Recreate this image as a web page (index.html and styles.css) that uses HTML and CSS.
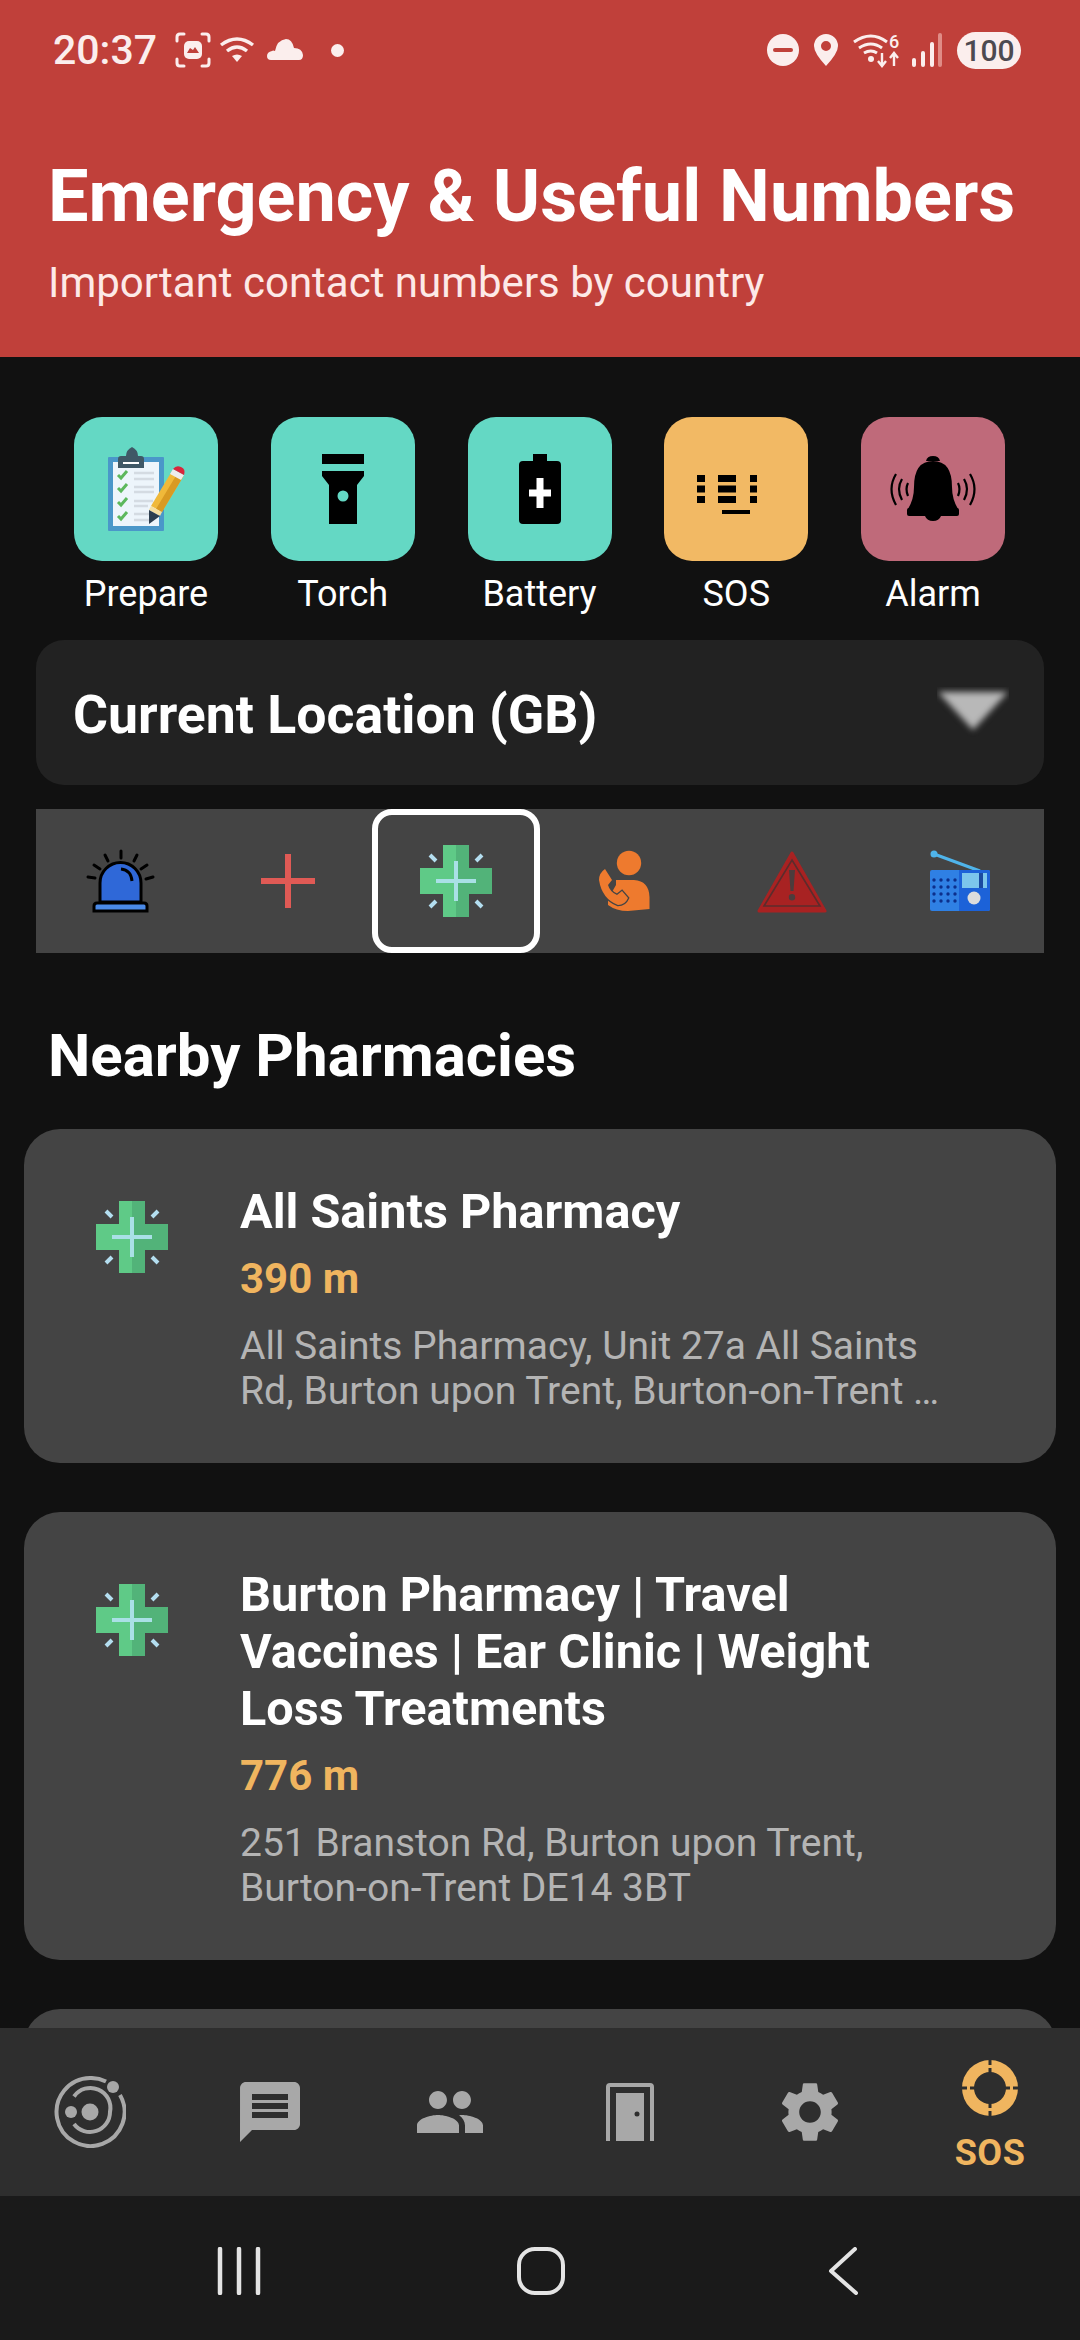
FILE: index.html
```html
<!DOCTYPE html>
<html lang="en">
<head>
    <meta charset="UTF-8">
    <meta name="viewport" content="width=device-width, initial-scale=1.0">
    <title>Emergency &amp; Useful Numbers</title>
    <link rel="stylesheet" href="styles.css">
</head>
<body>
    <svg class="defs" width="0" height="0">
        <symbol id="pharmacy" viewBox="0 0 72 72">
            <path fill="#5fca87" d="M23 0h26v23h23v26H49v23H23V49H0V23h23z"/>
            <path fill="#52b379" d="M36 0h13v23h23v26H49v23H36z"/>
            <path fill="#a9e0e6" d="M34 16h4v18h18v4H38v18h-4V38H16v-4h18z"/>
            <g stroke="#b4def0" stroke-width="4">
                <path d="M10 10l6 6M62 10l-6 6M10 62l6-6M62 62l-6-6"/>
            </g>
        </symbol>
    </svg>

    <div class="screen">
        <div class="content">
            <header class="header">
                <div class="statusbar">
                    <span class="clock">20:37</span>
                    <svg class="st-face" width="36" height="36" viewBox="0 0 36 36" fill="none" stroke="#fbeeed" stroke-width="3" stroke-linecap="round">
                        <path d="M2 9V5q0-3 3-3h4M27 2h4q3 0 3 3v4M34 27v4q0 3-3 3h-4M9 34H5q-3 0-3-3v-4"/>
                        <rect x="9" y="9" width="18" height="18" rx="5" fill="#fbeeed" stroke="none"/>
                        <path d="M12 21l3-5 3 2 2-3 4 6z" fill="#c0403a" stroke="none"/>
                    </svg>
                    <svg class="st-wifi" width="36" height="26" viewBox="0 0 36 26" fill="none" stroke="#fbeeed" stroke-width="3.4">
                        <path d="M2 8q16-12 32 0M8 14q10-8 20 0"/>
                        <path d="M13 19q5-3 10 0l-5 6z" fill="#fbeeed" stroke="none"/>
                    </svg>
                    <svg class="st-cloud" width="36" height="22" viewBox="0 0 36 22" fill="#fbeeed">
                        <path d="M4 21q-4 0-4-4t5-5q1-1 3 0 2-11 11-12 6 0 8 9 8 0 9 7 0 5-4 5z"/>
                    </svg>
                    <span class="st-dot"></span>
                    <span class="st-spacer"></span>
                    <svg class="st-dnd" width="32" height="32" viewBox="0 0 32 32">
                        <circle cx="16" cy="16" r="16" fill="#fbeeed"/>
                        <rect x="6" y="14" width="20" height="4" rx="2" fill="#c0403a"/>
                    </svg>
                    <svg class="st-pin" width="24" height="32" viewBox="0 0 24 32">
                        <path fill="#fbeeed" fill-rule="evenodd" d="M12 0a12 12 0 0 1 12 12q0 7-12 20Q0 19 0 12A12 12 0 0 1 12 0zm0 7a5 5 0 1 0 0 10 5 5 0 0 0 0-10z"/>
                    </svg>
                    <svg class="st-wifi6" width="48" height="36" viewBox="0 0 48 36" fill="none" stroke="#fbeeed" stroke-width="3">
                        <path d="M1 10q17-12 33 0M6 16q12-8 23 0M11 21q7-4 13 0"/>
                        <circle cx="18" cy="27" r="3" fill="#fbeeed" stroke="none"/>
                        <path d="M29 21v13M25 29l4 5 4-5M41 34V21M37 26l4-5 4 5" stroke-width="2.4"/>
                        <text x="36" y="16" class="st-six">6</text>
                    </svg>
                    <svg class="st-signal" width="30" height="34" viewBox="0 0 30 34">
                        <rect x="0" y="25" width="4" height="9" rx="2" fill="#fbeeed"/>
                        <rect x="9" y="18" width="4" height="16" rx="2" fill="#fbeeed"/>
                        <rect x="18" y="9" width="4" height="25" rx="2" fill="#fbeeed"/>
                        <rect x="26" y="0" width="4" height="34" rx="2" fill="#e08c86"/>
                    </svg>
                    <span class="st-battery">100</span>
                </div>
                <h1 class="title">Emergency &amp; Useful Numbers</h1>
                <p class="subtitle">Important contact numbers by country</p>
            </header>

            <section class="tools">
                <div class="tool">
                    <div class="tile teal">
                        <svg width="144" height="144" viewBox="0 0 144 144">
                            <rect x="34" y="40" width="56" height="74" rx="1" fill="#4a97c9"/>
                            <rect x="39" y="45" width="46" height="64" fill="#edf5fb"/>
                            <path fill="#3f5866" d="M44 51v-9q0-3 3-3h5q0-6 6-9 6 3 6 9h3q3 0 3 3v9z"/>
                            <rect x="49" y="45" width="16" height="2" fill="#fff"/>
                            <g fill="none" stroke="#5cb85c" stroke-width="3">
                                <path d="M44 58l3 3 6-7M44 71l3 3 6-7M44 85l3 3 6-7M44 99l3 3 6-7"/>
                            </g>
                            <g fill="none" stroke="#d4dbe2" stroke-width="2.6">
                                <path d="M60 56h20M60 62h20M60 70h20M60 75h20M60 84h19M60 89h14M60 97h15M60 103h15"/>
                            </g>
                            <path fill="#f0b93a" d="M98 54l11 6-21 35-11-6z"/>
                            <path fill="#d99a22" d="M103 57l6 3-21 35-6-3z"/>
                            <path fill="#f6dfa0" d="M77 89l11 6-2 4-11-6z"/>
                            <path fill="#2c3e50" d="M75 93l11 6-11 8z"/>
                            <path fill="#ededed" d="M96 57l3-5 11 6-3 5z"/>
                            <path fill="#d9263c" d="M99 52q3-4 8-2t3 8z"/>
                        </svg>
                    </div>
                    <span class="tool-label">Prepare</span>
                </div>
                <div class="tool">
                    <div class="tile teal">
                        <svg width="144" height="144" viewBox="0 0 144 144">
                            <rect x="51" y="37" width="42" height="10"/>
                            <path fill-rule="evenodd" d="M51 54h42v5l-7 9v39H58V68l-7-9zM72 73.500a5.500 5.500 0 1 0 0 11 5.500 5.500 0 0 0 0-11z"/>
                        </svg>
                    </div>
                    <span class="tool-label">Torch</span>
                </div>
                <div class="tool">
                    <div class="tile teal">
                        <svg width="144" height="144" viewBox="0 0 144 144">
                            <path d="M65 37h14v7h10q4 0 4 4v55q0 4-4 4H55q-4 0-4-4V48q0-4 4-4h10z"/>
                            <path fill="#fff" d="M68.500 61h7v11.500H83v7h-7.500V91h-7V79.500H61v-7h7.500z"/>
                        </svg>
                    </div>
                    <span class="tool-label">Battery</span>
                </div>
                <div class="tool">
                    <div class="tile amber">
                        <svg width="144" height="144" viewBox="0 0 144 144">
                            <path d="M33 58h8v7h-8zM33 68.500h8v7h-8zM33 79h8v7h-8zM54 58h18v7H54zM54 68.500h18v7H54zM54 79h18v7H54zM86 58h7v7h-7zM86 68.500h7v7h-7zM86 79h7v7h-7zM58 93h28v4H58z"/>
                        </svg>
                    </div>
                    <span class="tool-label">SOS</span>
                </div>
                <div class="tool">
                    <div class="tile rose">
                        <svg width="144" height="144" viewBox="0 0 144 144">
                            <path d="M65 44q1-5 7-5t7 5z"/>
                            <path d="M72 44q19 0 19 26 0 12 6 22H47q6-10 6-22 0-26 19-26z"/>
                            <rect x="46" y="91" width="52" height="8" rx="2"/>
                            <path d="M64 99h16q-2 5-8 5t-8-5z"/>
                            <g fill="none" stroke="#000" stroke-width="2.2">
                                <path d="M35 57q-9 15 0 31M41 62q-6 10 0 21M47 66q-3 6 0 13"/>
                                <path d="M109 57q9 15 0 31M103 62q6 10 0 21M97 66q3 6 0 13"/>
                            </g>
                        </svg>
                    </div>
                    <span class="tool-label">Alarm</span>
                </div>
            </section>

            <div class="location">
                <span class="location-name">Current Location (GB)</span>
                <div class="chevron"><div class="chevron-shape"></div></div>
            </div>

            <nav class="tabs">
                <div class="tab">
                    <svg width="72" height="72" viewBox="0 0 72 72">
                        <path fill="#2f68d8" stroke="#000" stroke-width="3" d="M16 57V38a20.500 20.500 0 0 1 41 0v19z"/>
                        <path fill="#4a8ae8" stroke="#000" stroke-width="3" d="M10 66v-5q0-3 3-3h47q3 0 3 3v5z"/>
                        <path fill="none" stroke="#000" stroke-width="3" d="M37 24q10 1 11 12"/>
                        <g stroke="#000" stroke-width="3" stroke-linecap="round">
                            <path d="M37 6v7M21 10l3 6M53 10l-3 6M10 20l6 4M63 20l-6 4M4 32l7 1M69 32l-7 2"/>
                        </g>
                    </svg>
                </div>
                <div class="tab">
                    <svg width="72" height="72" viewBox="0 0 72 72">
                        <path fill="#e05a55" d="M33 9h6v24h24v6H39v24h-6V39H9v-6h24z"/>
                    </svg>
                </div>
                <div class="tab active">
                    <svg width="72" height="72"><use href="#pharmacy"/></svg>
                </div>
                <div class="tab">
                    <svg width="72" height="72" viewBox="0 0 72 72">
                        <circle cx="41" cy="18" r="12.200" fill="#ee7a2e"/>
                        <path fill="#ee7a2e" d="M28 35H46Q61 36 61.500 52V64L40 66Q28 66 20 60V54L28 40Z"/>
                        <path fill="#ee7a2e" stroke="#444" stroke-width="2.600" paint-order="stroke" d="M17 24L24 35 20 40Q22 47 29 50L34 46 40 53Q37 60 30 60 14 54 11 35 11 28 17 24Z"/>
                    </svg>
                </div>
                <div class="tab">
                    <svg width="72" height="72" viewBox="0 0 72 72">
                        <path fill="#a82222" stroke="#a82222" stroke-width="3" stroke-linejoin="round" d="M36 8l33 58H3z"/>
                        <path fill="none" stroke="#5c2c2c" stroke-width="1.600" d="M36 15l28 46H8z"/>
                        <path fill="#4c3c3c" d="M33 25h6l-1.500 21h-3zM36 49a3.200 3.200 0 1 1 0 6.400 3.200 3.200 0 0 1 0-6.400z"/>
                    </svg>
                </div>
                <div class="tab">
                    <svg width="72" height="72" viewBox="0 0 72 72">
                        <path stroke="#4fb4ea" stroke-width="3" d="M10 9l46 17"/>
                        <circle cx="10" cy="9" r="3.500" fill="#4fb4ea"/>
                        <rect x="6" y="25" width="60" height="41" rx="2" fill="#2f80e4"/>
                        <path fill="#1c62d8" d="M35 25h29q2 0 2 2v37q0 2-2 2H35z"/>
                        <rect x="38" y="28" width="25" height="15" fill="#7cc6ec"/>
                        <rect x="55" y="28" width="4" height="15" fill="#1a4aa0"/>
                        <circle cx="50" cy="53" r="6.500" fill="#dcdcdc"/>
                        <g fill="#0c2f8c">
                            <circle cx="10" cy="35" r="1.700"/><circle cx="17" cy="35" r="1.700"/><circle cx="24" cy="35" r="1.700"/><circle cx="31" cy="35" r="1.700"/>
                            <circle cx="10" cy="42" r="1.700"/><circle cx="17" cy="42" r="1.700"/><circle cx="24" cy="42" r="1.700"/><circle cx="31" cy="42" r="1.700"/>
                            <circle cx="10" cy="49" r="1.700"/><circle cx="17" cy="49" r="1.700"/><circle cx="24" cy="49" r="1.700"/><circle cx="31" cy="49" r="1.700"/>
                            <circle cx="10" cy="56" r="1.700"/><circle cx="17" cy="56" r="1.700"/><circle cx="24" cy="56" r="1.700"/><circle cx="31" cy="56" r="1.700"/>
                        </g>
                    </svg>
                </div>
            </nav>

            <h2 class="section-title">Nearby Pharmacies</h2>

            <article class="card">
                <svg class="card-icon" width="72" height="72"><use href="#pharmacy"/></svg>
                <div class="card-body">
                    <h3 class="card-title">All Saints Pharmacy</h3>
                    <div class="card-dist">390 m</div>
                    <p class="card-addr">All Saints Pharmacy, Unit 27a All Saints Rd, Burton upon Trent, Burton-on-Trent …</p>
                </div>
            </article>

            <article class="card">
                <svg class="card-icon" width="72" height="72"><use href="#pharmacy"/></svg>
                <div class="card-body">
                    <h3 class="card-title">Burton Pharmacy | Travel Vaccines | Ear Clinic | Weight Loss Treatments</h3>
                    <div class="card-dist">776 m</div>
                    <p class="card-addr">251 Branston Rd, Burton upon Trent, Burton-on-Trent DE14 3BT</p>
                </div>
            </article>

            <article class="card"></article>
        </div>

        <nav class="bottom-nav">
            <div class="nav-item">
                <svg width="72" height="72" viewBox="0 0 72 72" fill="none" stroke="#a8a8a8" stroke-width="4">
                    <path d="M52 5.500A34 34 0 0 0 36 2a34 34 0 1 0 30 17"/>
                    <path d="M20 20.500A20 20 0 0 1 56 36a20 20 0 0 1-36 12"/>
                    <circle cx="36" cy="36" r="8.500" fill="#a8a8a8" stroke="none"/>
                    <circle cx="59" cy="11" r="6" fill="#a8a8a8" stroke="none"/>
                    <circle cx="17" cy="36" r="6" fill="#a8a8a8" stroke="none"/>
                </svg>
            </div>
            <div class="nav-item">
                <svg width="72" height="72" viewBox="0 0 24 24" fill="#a8a8a8">
                    <path d="M20 2H4c-1.100 0-1.990.9-1.990 2L2 22l4-4h14c1.100 0 2-.9 2-2V4c0-1.100-.9-2-2-2zm-2 12H6v-2h12v2zm0-3H6V9h12v2zm0-3H6V6h12v2z"/>
                </svg>
            </div>
            <div class="nav-item">
                <svg width="72" height="72" viewBox="0 0 24 24" fill="#a8a8a8">
                    <path d="M16 11c1.660 0 2.990-1.340 2.990-3S17.660 5 16 5c-1.660 0-3 1.340-3 3s1.340 3 3 3zm-8 0c1.660 0 2.990-1.340 2.990-3S9.660 5 8 5C6.340 5 5 6.340 5 8s1.340 3 3 3zm0 2c-2.330 0-7 1.170-7 3.500V19h14v-2.500c0-2.330-4.670-3.500-7-3.500zm8 0c-.29 0-.62.02-.97.05 1.160.84 1.970 1.970 1.970 3.450V19h6v-2.500c0-2.330-4.670-3.500-7-3.500z"/>
                </svg>
            </div>
            <div class="nav-item">
                <svg width="72" height="72" viewBox="0 0 72 72">
                    <path fill="none" stroke="#a8a8a8" stroke-width="4" d="M14 65V11q0-2 2-2h40q2 0 2 2v54"/>
                    <rect x="22" y="17" width="28" height="48" fill="#a8a8a8"/>
                    <circle cx="43" cy="38" r="2.500" fill="#2e2e2e"/>
                </svg>
            </div>
            <div class="nav-item">
                <svg width="72" height="72" viewBox="0 0 24 24" fill="#a8a8a8">
                    <path d="M19.140 12.940c.04-.3.06-.61.06-.94 0-.32-.02-.64-.07-.94l2.030-1.580c.18-.14.23-.41.12-.61l-1.920-3.320c-.12-.22-.37-.29-.59-.22l-2.390.96c-.5-.38-1.030-.7-1.620-.94l-.36-2.540c-.04-.24-.24-.41-.48-.41h-3.840c-.24 0-.43.17-.47.41l-.36 2.540c-.59.24-1.130.57-1.620.94l-2.390-.96c-.22-.08-.47 0-.59.22L2.740 8.870c-.12.21-.08.47.12.61l2.030 1.580c-.05.3-.09.63-.09.94s.02.64.07.94l-2.030 1.580c-.18.14-.23.41-.12.61l1.920 3.320c.12.22.37.29.59.22l2.390-.96c.5.38 1.030.7 1.620.94l.36 2.540c.05.24.24.41.48.41h3.840c.24 0 .44-.17.47-.41l.36-2.540c.59-.24 1.130-.56 1.620-.94l2.390.96c.22.08.47 0 .59-.22l1.920-3.320c.12-.22.07-.47-.12-.61l-2.010-1.580zM12 15.600c-1.980 0-3.600-1.620-3.600-3.600s1.620-3.600 3.600-3.600 3.600 1.620 3.600 3.600-1.620 3.600-3.600 3.600z"/>
                </svg>
            </div>
            <div class="nav-item selected">
                <svg width="56" height="56" viewBox="0 0 56 56">
                    <circle cx="28" cy="28" r="28" fill="#f0b55f"/>
                    <circle cx="28" cy="28" r="16" fill="#2e2e2e"/>
                    <path stroke="#2e2e2e" stroke-width="3" d="M28 0v5M28 8v8M28 40v8M28 51v5M0 28h5M8 28h8M40 28h8M51 28h5"/>
                </svg>
                <span class="nav-label">SOS</span>
            </div>
        </nav>

        <div class="system-nav">
            <div class="sys-btn">
                <svg width="44" height="48" viewBox="0 0 44 48" fill="none" stroke="#e4e4e4" stroke-width="4.500" stroke-linecap="round">
                    <path d="M3 2v44M22 2v44M41 2v44"/>
                </svg>
            </div>
            <div class="sys-btn">
                <svg width="48" height="48" viewBox="0 0 48 48" fill="none">
                    <rect x="2" y="2" width="44" height="44" rx="16" stroke="#e4e4e4" stroke-width="4"/>
                </svg>
            </div>
            <div class="sys-btn">
                <svg width="30" height="48" viewBox="0 0 30 48" fill="none" stroke="#e4e4e4" stroke-width="4" stroke-linecap="round" stroke-linejoin="round">
                    <path d="M27 2L3 24l25 22"/>
                </svg>
            </div>
        </div>
    </div>
</body>
</html>
```
FILE: styles.css
```css
* {
    box-sizing: border-box;
}

html, body {
    margin: 0;
    padding: 0;
}

body {
    font-family: Roboto, "Liberation Sans", sans-serif;
    background-color: #111;
    color: white;
}

.defs {
    position: absolute;
}

svg {
    display: block;
    flex: none;
}

.screen {
    width: 1080px;
    height: 2340px;
    display: flex;
    flex-direction: column;
    overflow: hidden;
}

.content {
    flex: 1;
    min-height: 0;
    overflow: hidden;
}

/* header */

.header {
    height: 357px;
    background-color: #c0403a;
    padding: 30px 50px 0 48px;
}

.statusbar {
    display: flex;
    align-items: center;
    height: 40px;
    margin-left: 5px;
    color: #fbeeed;
}

.clock {
    font-size: 41px;
    font-weight: 500;
    margin-right: 18px;
}

.st-wifi {
    margin-left: 8px;
}

.st-cloud {
    margin-left: 12px;
}

.st-dot {
    width: 13px;
    height: 13px;
    border-radius: 50%;
    background-color: #fbeeed;
    margin-left: 28px;
}

.st-spacer {
    flex: 1;
}

.st-pin {
    margin-left: 15px;
}

.st-wifi6 {
    margin-left: 15px;
}

.st-six {
    font-size: 18px;
    font-weight: 500;
    fill: #fbeeed;
    stroke: none;
}

.st-signal {
    margin-left: 11px;
}

.st-battery {
    width: 64px;
    height: 37px;
    line-height: 37px;
    border-radius: 19px;
    background-color: #fbeeed;
    color: #4d4a50;
    font-size: 30px;
    font-weight: 500;
    text-align: center;
    margin-left: 15px;
    margin-right: 9px;
}

.title {
    margin: 85px 0 0;
    font-size: 72px;
    font-weight: 700;
    line-height: 84px;
    white-space: nowrap;
}

.subtitle {
    margin: 20px 0 0;
    font-size: 42px;
    font-weight: 400;
    line-height: 48px;
    color: #fde9e7;
}

/* quick tools */

.tools {
    display: flex;
    justify-content: space-between;
    padding: 60px 75px 0 74px;
}

.tool {
    width: 144px;
    display: flex;
    flex-direction: column;
    align-items: center;
}

.tile {
    width: 144px;
    height: 144px;
    border-radius: 28px;
}

.teal {
    background-color: #64d8c4;
}

.amber {
    background-color: #f2b964;
}

.rose {
    background-color: #bf6a7a;
}

.tool-label {
    font-size: 36px;
    line-height: 44px;
    margin-top: 11px;
    white-space: nowrap;
}

/* location + tabs */

.location {
    height: 145px;
    margin: 24px 36px 0;
    padding: 4px 35px 0 37px;
    background-color: #222;
    border-radius: 28px;
    display: flex;
    align-items: center;
    justify-content: space-between;
}

.location-name {
    font-size: 53.6px;
    font-weight: 700;
}

.chevron {
    width: 72px;
    height: 50px;
    margin-top: -6px;
    overflow: hidden;
}

.chevron-shape {
    width: 0;
    height: 0;
    border-left: 35px solid transparent;
    border-right: 35px solid transparent;
    border-top: 38px solid #b8b8b8;
    margin: 5px 1px;
    filter: blur(3px);
}

.tabs {
    height: 144px;
    margin: 24px 36px 0;
    background-color: #444;
    display: grid;
    grid-template-columns: repeat(6, 1fr);
}

.tab {
    display: flex;
    align-items: center;
    justify-content: center;
}

.tab.active {
    border: 6px solid white;
    border-radius: 20px;
}

/* pharmacy list */

.section-title {
    margin: 68px 48px 0;
    font-size: 60px;
    font-weight: 700;
    line-height: 70px;
}

.card {
    margin: 38px 24px 0;
    padding: 54px 101px 49px 72px;
    background-color: #444;
    border-radius: 36px;
    display: flex;
    align-items: flex-start;
    min-height: 100px;
}

.card + .card {
    margin-top: 49px;
}

.card-icon {
    margin-top: 18px;
}

.card-body {
    margin-left: 72px;
    flex: 1;
}

.card-title {
    margin: 0;
    font-size: 48.6px;
    font-weight: 700;
    line-height: 57px;
}

.card-dist {
    margin-top: 14px;
    font-size: 42px;
    font-weight: 700;
    line-height: 50px;
    color: #f0b55f;
}

.card-addr {
    margin: 20px 0 0;
    font-size: 39px;
    line-height: 45px;
    color: #b4b4b4;
}

/* bottom navigation */

.bottom-nav {
    flex: none;
    height: 168px;
    background-color: #2e2e2e;
    display: grid;
    grid-template-columns: repeat(6, 1fr);
}

.nav-item {
    display: flex;
    flex-direction: column;
    align-items: center;
    justify-content: center;
}

.nav-item.selected {
    justify-content: flex-start;
    padding-top: 32px;
    color: #f0b55f;
}

.nav-label {
    font-size: 36px;
    font-weight: 700;
    line-height: 40px;
    margin-top: 17px;
    letter-spacing: 0.5px;
}

.system-nav {
    flex: none;
    height: 144px;
    background-color: #1a1a1a;
    display: grid;
    grid-template-columns: repeat(3, 302px);
    padding: 6px 0 0 88px;
    align-items: center;
    justify-items: center;
}
```
